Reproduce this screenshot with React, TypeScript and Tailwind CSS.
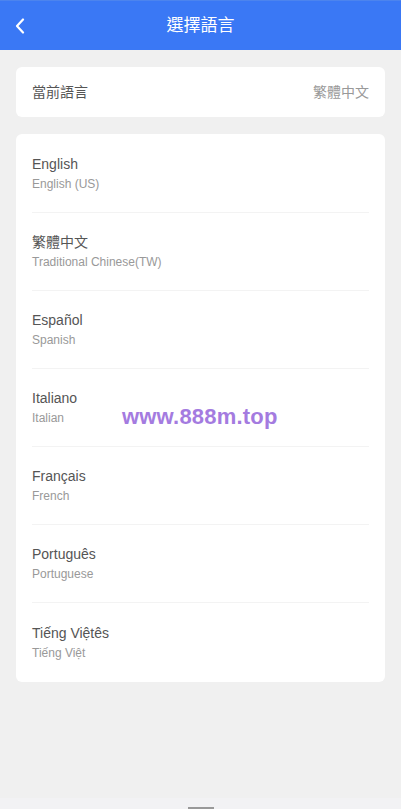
const languages = [
  { name: 'English', sub: 'English (US)' },
  { name: '繁體中文', sub: 'Traditional Chinese(TW)' },
  { name: 'Español', sub: 'Spanish' },
  { name: 'Italiano', sub: 'Italian' },
  { name: 'Français', sub: 'French' },
  { name: 'Português', sub: 'Portuguese' },
  { name: 'Tiếng Việtês', sub: 'Tiếng Việt' },
]

const App = () => {
  return (
    <div
      className="relative w-[401px] h-[809px] bg-[#f0f0f0] flex flex-col overflow-hidden"
      style={{ fontFamily: '"Liberation Sans", Arial, "Noto Sans CJK TC", sans-serif' }}
    >
      {/* Header */}
      <div className="h-[50px] bg-[#3a78f5] border-t border-[#4c84ee] flex items-center relative shrink-0">
        <button className="w-[40px] h-full flex items-center justify-center" aria-label="Back">
          <svg width="12" height="16" viewBox="0 0 12 16" fill="none">
            <path d="M9 1.5 L3 8 L9 14.5" stroke="#fff" strokeWidth="2.2" strokeLinecap="round" strokeLinejoin="round" />
          </svg>
        </button>
        <h1 className="absolute left-0 right-0 text-center text-white text-[17px] pointer-events-none">選擇語言</h1>
      </div>

      <div className="px-4 pt-[17px] flex flex-col gap-[17px]">
        {/* Current language */}
        <div className="bg-white rounded-[6px] h-[50px] px-4 flex items-center justify-between">
          <span className="text-[14px] text-[#555]">當前語言</span>
          <span className="text-[14px] text-[#999]">繁體中文</span>
        </div>

        {/* Language list */}
        <div className="bg-white rounded-[6px] px-4 py-[1px]">
          {languages.map((lang, i) => (
            <div
              key={lang.name}
              className={`h-[78px] flex flex-col justify-center ${i < languages.length - 1 ? 'border-b border-[#f3f3f3]' : ''}`}
            >
              <div className="text-[14px] leading-[20px] text-[#555]">{lang.name}</div>
              <div className="mt-[1px] text-[12px] leading-[18px] text-[#999]">{lang.sub}</div>
            </div>
          ))}
        </div>
      </div>

      {/* Watermark */}
      <div className="absolute left-[122px] top-[403px] text-[22px] leading-[28px] font-bold text-[#a47be0] tracking-[0.2px]">
        www.888m.top
      </div>

      {/* Bottom bar */}
      <div className="mt-auto h-[11px] bg-[#f2f2f4] flex items-end justify-center">
        <div className="w-[26px] h-[2px] bg-[#999]" />
      </div>
    </div>
  )
}

export default App
